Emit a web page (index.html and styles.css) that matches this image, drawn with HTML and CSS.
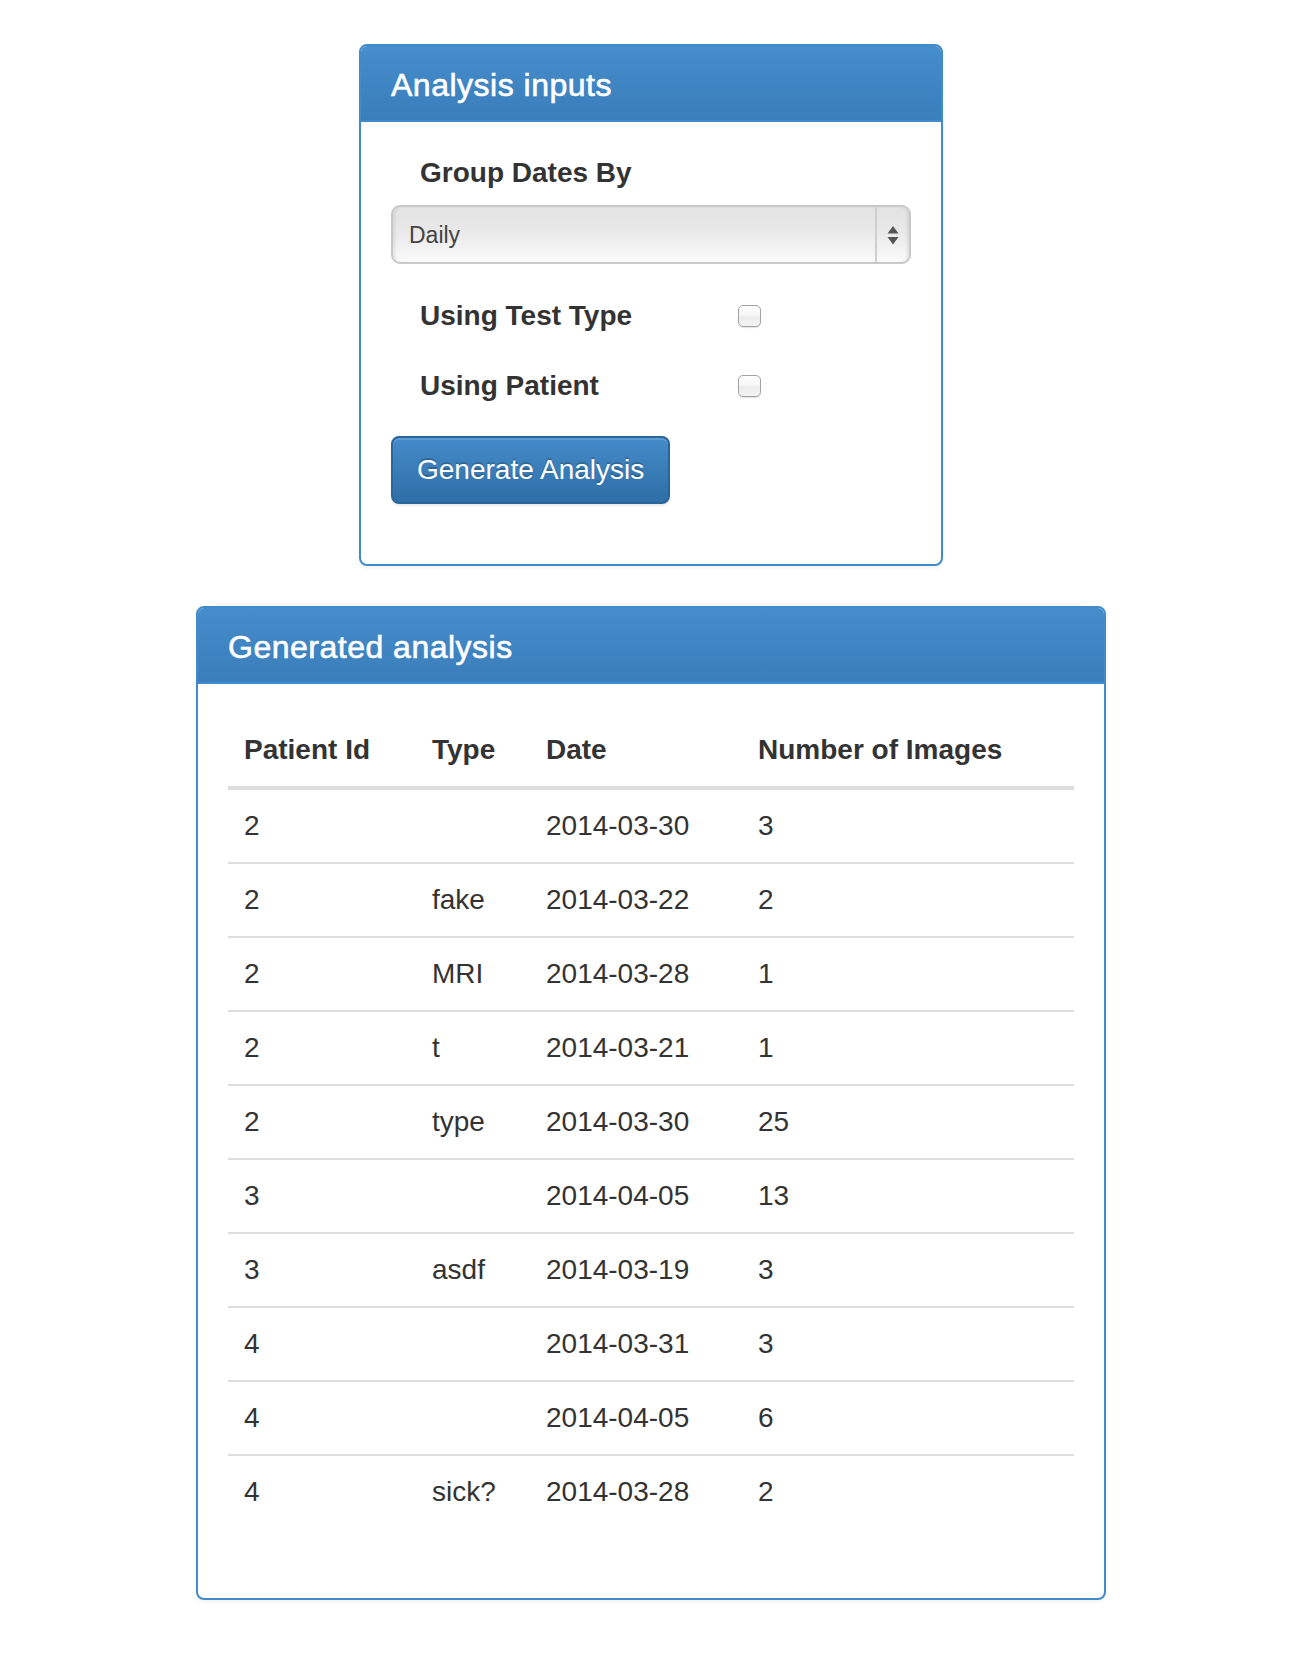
FILE: index.html
```html
<!DOCTYPE html>
<html lang="en">
<head>
<meta charset="utf-8">
<title>Analysis</title>
<link rel="stylesheet" href="styles.css">
</head>
<body>
<div class="page">
  <section class="panel panel-inputs">
    <div class="panel-heading"><h3 class="panel-title">Analysis inputs</h3></div>
    <div class="panel-body">
      <div class="form-group">
        <label class="group-label">Group Dates By</label>
        <div class="select">
          <span class="select-value">Daily</span>
          <span class="select-arrows">
            <svg width="12" height="20" viewBox="0 0 12 20"><path d="M6 0 L11.5 7.5 H0.5 Z" fill="#555"/><path d="M0.5 11 H11.5 L6 18.5 Z" fill="#555"/></svg>
          </span>
        </div>
      </div>
      <div class="check-row">
        <label class="check-label">Using Test Type</label>
        <input type="checkbox" class="checkbox">
      </div>
      <div class="check-row">
        <label class="check-label">Using Patient</label>
        <input type="checkbox" class="checkbox">
      </div>
      <div class="form-group btn-group">
        <button class="btn-primary" type="button">Generate Analysis</button>
      </div>
    </div>
  </section>

  <section class="panel panel-results">
    <div class="panel-heading"><h3 class="panel-title">Generated analysis</h3></div>
    <div class="panel-body">
      <table class="table">
        <colgroup>
          <col class="c1"><col class="c2"><col class="c3"><col class="c4">
        </colgroup>
        <thead>
          <tr><th>Patient Id</th><th>Type</th><th>Date</th><th>Number of Images</th></tr>
        </thead>
        <tbody>
          <tr><td>2</td><td></td><td>2014-03-30</td><td>3</td></tr>
          <tr><td>2</td><td>fake</td><td>2014-03-22</td><td>2</td></tr>
          <tr><td>2</td><td>MRI</td><td>2014-03-28</td><td>1</td></tr>
          <tr><td>2</td><td>t</td><td>2014-03-21</td><td>1</td></tr>
          <tr><td>2</td><td>type</td><td>2014-03-30</td><td>25</td></tr>
          <tr><td>3</td><td></td><td>2014-04-05</td><td>13</td></tr>
          <tr><td>3</td><td>asdf</td><td>2014-03-19</td><td>3</td></tr>
          <tr><td>4</td><td></td><td>2014-03-31</td><td>3</td></tr>
          <tr><td>4</td><td></td><td>2014-04-05</td><td>6</td></tr>
          <tr><td>4</td><td>sick?</td><td>2014-03-28</td><td>2</td></tr>
        </tbody>
      </table>
    </div>
  </section>
</div>
</body>
</html>
```

FILE: styles.css
```css
* { box-sizing: border-box; }

html, body {
  margin: 0;
  padding: 0;
  background: #fff;
}

body {
  font-family: "Liberation Sans", Arial, sans-serif;
  font-size: 28px;
  line-height: 40px;
  color: #333;
}

.page {
  display: flex;
  flex-direction: column;
  align-items: center;
  padding: 44px 0 0 10px;
}

.panel {
  background: #fff;
  border: 2px solid #428bca;
  border-radius: 8px;
  box-shadow: 0 2px 4px rgba(0, 0, 0, 0.05);
  margin-bottom: 40px;
}

.panel-inputs { width: 584px; }
.panel-results { width: 910px; }

.panel-heading {
  padding: 22px 30px 18px;
  background: linear-gradient(to bottom, #468dcb 0%, #3a7ebb 100%);
  border-bottom: 2px solid #428bca;
  border-radius: 6px 6px 0 0;
  color: #fff;
}

.panel-title {
  margin: 0;
  font-size: 32px;
  line-height: 34px;
  font-weight: 400;
  letter-spacing: 0.5px;
  -webkit-text-stroke: 0.6px #fff;
}

.panel-body {
  padding: 30px;
}

.panel-inputs .panel-body {
  padding-top: 31px;
}

.form-group {
  margin-bottom: 32px;
}

.group-label,
.check-label {
  display: block;
  font-weight: 700;
  padding-left: 29px;
  line-height: 40px;
}

.group-label {
  margin-bottom: 12px;
}

.select {
  height: 59px;
  border: 2px solid #c9c9c9;
  border-radius: 9px;
  background: linear-gradient(to bottom, #e3e3e3 0%, #e9e9e9 45%, #f6f6f6 85%, #fbfbfb 100%);
  box-shadow: inset 3px 0 3px -1px rgba(0, 0, 0, 0.08), inset -3px 0 3px -1px rgba(0, 0, 0, 0.08);
  display: flex;
  align-items: center;
}

.select-value {
  flex: 1;
  padding-left: 16px;
  font-size: 23px;
  color: #444;
  line-height: 30px;
}

.select-arrows {
  width: 34px;
  height: 100%;
  border-left: 2px solid #cfcfcf;
  display: flex;
  align-items: center;
  justify-content: center;
  padding-top: 2px;
}

.check-row {
  display: grid;
  grid-template-columns: 347px 23px;
  align-items: center;
  margin-bottom: 30px;
}

.check-row + .btn-group {
  margin-top: 2px;
}

.checkbox {
  -webkit-appearance: none;
  appearance: none;
  margin: 0;
  width: 23px;
  height: 22px;
  border: 1.5px solid #a3a3a3;
  border-radius: 5px;
  background: linear-gradient(to bottom, #ffffff 0%, #f7f7f7 45%, #ececec 55%, #f4f4f4 100%);
  box-shadow: 0 1px 1px rgba(0, 0, 0, 0.12);
}

.btn-group {
  margin-bottom: 30px;
}

.btn-primary {
  height: 68px;
  padding: 0 24px;
  font-family: "Liberation Sans", Arial, sans-serif;
  font-size: 28px;
  line-height: 40px;
  color: #fff;
  border: 2px solid #2b669a;
  border-radius: 8px;
  background: linear-gradient(to bottom, #448bc9 0%, #2f6ea6 100%);
  text-shadow: 0 -2px 0 rgba(0, 0, 0, 0.2);
  box-shadow: inset 0 2px 0 rgba(255, 255, 255, 0.15), 0 2px 2px rgba(0, 0, 0, 0.075);
}

.table {
  width: 100%;
  border-collapse: collapse;
  table-layout: fixed;
  margin-bottom: 40px;
}

.c1 { width: 188px; }
.c2 { width: 114px; }
.c3 { width: 212px; }

.table th,
.table td {
  padding: 16px;
  text-align: left;
  vertical-align: top;
  line-height: 40px;
}

.table th {
  font-weight: 700;
  border-bottom: 4px solid #ddd;
}

.table td {
  border-top: 2px solid #ddd;
}
```
